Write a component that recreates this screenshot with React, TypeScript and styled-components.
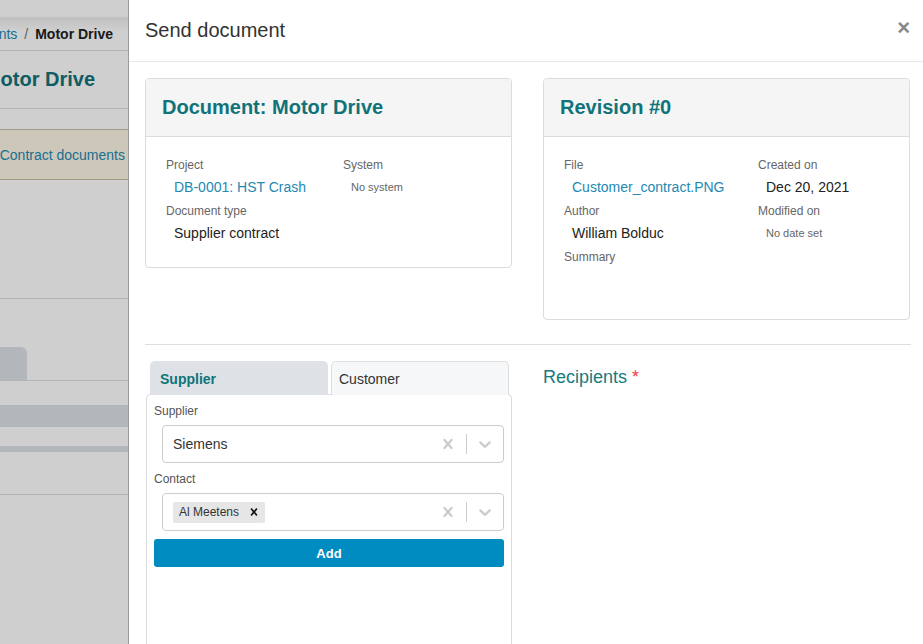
import React from 'react';
import styled, { createGlobalStyle } from 'styled-components';

const teal = '#11737a';
const link = '#2389b3';

const GlobalStyle = createGlobalStyle`
    html, body {
        margin: 0;
        height: 100%;
        overflow: hidden;
        background: #fff;
        font-family: "Liberation Sans", Arial, sans-serif;
    }
    * {
        box-sizing: border-box;
    }
`;

const CrossIcon = ({ size = 20, color = '#ccc' }: { size?: number; color?: string }) => (
    <svg width={size} height={size} viewBox="0 0 20 20" fill={color}>
        <path d="M14.348 14.849c-0.469 0.469-1.229 0.469-1.697 0l-2.651-3.030-2.651 3.029c-0.469 0.469-1.229 0.469-1.697 0-0.469-0.469-0.469-1.229 0-1.697l2.758-3.15-2.759-3.152c-0.469-0.469-0.469-1.228 0-1.697s1.228-0.469 1.697 0l2.652 3.031 2.651-3.031c0.469-0.469 1.228-0.469 1.697 0s0.469 1.229 0 1.697l-2.758 3.152 2.758 3.150c0.469 0.469 0.469 1.229 0 1.698z" />
    </svg>
);

const ChevronIcon = () => (
    <svg width={20} height={20} viewBox="0 0 20 20" fill="#ccc">
        <path d="M4.516 7.548c0.436-0.446 1.043-0.481 1.576 0l3.908 3.747 3.908-3.747c0.533-0.481 1.141-0.446 1.574 0 0.436 0.445 0.408 1.197 0 1.615-0.406 0.418-4.695 4.502-4.695 4.502-0.217 0.223-0.502 0.335-0.787 0.335s-0.57-0.112-0.789-0.335c0 0-4.287-4.084-4.695-4.502s-0.436-1.17 0-1.615z" />
    </svg>
);

const Select = ({ children }: { children: React.ReactNode }) => (
    <SelectBox>
        <ValueArea>{children}</ValueArea>
        <Indicator><CrossIcon /></Indicator>
        <IndicatorSep />
        <Indicator><ChevronIcon /></Indicator>
    </SelectBox>
);

const App: React.FC = () => {
    return (
        <>
            <GlobalStyle />
            {/* page behind the drawer */}
            <BackPage>
                <BackNav>
                    <BackLink>Documents</BackLink>
                    <CrumbSep>/</CrumbSep>
                    <CrumbCurrent>Motor Drive</CrumbCurrent>
                </BackNav>
                <BackTitleRow>
                    <BackTitle>Motor Drive</BackTitle>
                </BackTitleRow>
                <Notice>
                    <BackLink>Contract documents</BackLink>
                </Notice>
                <BackSection />
                <BackTabs>
                    <BackTab />
                </BackTabs>
                <BackBar $h={22} $mt={24} />
                <BackBar $h={6} $mt={19} />
                <BackRule />
            </BackPage>
            <Overlay />

            <Drawer>
                <DrawerHeader>
                    <DrawerTitle>Send document</DrawerTitle>
                    <CloseButton>×</CloseButton>
                </DrawerHeader>
                <DrawerBody>
                    <CardRow>
                        <Card>
                            <CardHeader>
                                <CardTitle>Document: Motor Drive</CardTitle>
                            </CardHeader>
                            <CardBody $cols="177px 1fr">
                                <Field>
                                    <Label>Project</Label>
                                    <Value $link>DB-0001: HST Crash</Value>
                                </Field>
                                <Field>
                                    <Label>System</Label>
                                    <Value $muted>No system</Value>
                                </Field>
                                <Field>
                                    <Label>Document type</Label>
                                    <Value>Supplier contract</Value>
                                </Field>
                            </CardBody>
                        </Card>
                        <Card>
                            <CardHeader>
                                <CardTitle>Revision #0</CardTitle>
                            </CardHeader>
                            <CardBody $cols="194px 1fr">
                                <Field>
                                    <Label>File</Label>
                                    <Value $link>Customer_contract.PNG</Value>
                                </Field>
                                <Field>
                                    <Label>Created on</Label>
                                    <Value>Dec 20, 2021</Value>
                                </Field>
                                <Field>
                                    <Label>Author</Label>
                                    <Value>William Bolduc</Value>
                                </Field>
                                <Field>
                                    <Label>Modified on</Label>
                                    <Value $muted>No date set</Value>
                                </Field>
                                <Field>
                                    <Label>Summary</Label>
                                    <Value $tall />
                                </Field>
                            </CardBody>
                        </Card>
                    </CardRow>

                    <Divider />

                    <LowerRow>
                        <div>
                            <Tabs>
                                <Tab $active>Supplier</Tab>
                                <Tab>Customer</Tab>
                            </Tabs>
                            <Panel>
                                <PanelLabel>Supplier</PanelLabel>
                                <Select>
                                    <SelectText>Siemens</SelectText>
                                </Select>
                                <PanelLabel>Contact</PanelLabel>
                                <Select>
                                    <Chip>
                                        <ChipLabel>Al Meetens</ChipLabel>
                                        <ChipRemove><CrossIcon size={14} color="#111" /></ChipRemove>
                                    </Chip>
                                </Select>
                                <AddButton>Add</AddButton>
                            </Panel>
                        </div>
                        <Recipients>
                            Recipients <Required>*</Required>
                        </Recipients>
                    </LowerRow>
                </DrawerBody>
            </Drawer>
        </>
    );
};

export default App;

/* ---------- background page ---------- */

const BackPage = styled.div`
    width: 128px;
    overflow: hidden;
    background: #fff;
    height: 100vh;
`;

const BackNav = styled.div`
    height: 51px;
    padding: 17px 15px 0 0;
    display: flex;
    align-items: center;
    justify-content: flex-end;
    white-space: nowrap;
    font-size: 14px;
    border-bottom: 1px solid #dedede;
    background: linear-gradient(to bottom, #fff 0, #fff 16px, #ececec 18px, #fff 30px);
`;

const BackLink = styled.span`
    color: ${link};
    font-size: 14px;
`;

const CrumbSep = styled.span`
    color: #777;
    margin: 0 7px;
`;

const CrumbCurrent = styled.span`
    color: #222;
    font-weight: bold;
`;

const BackTitleRow = styled.div`
    height: 58px;
    display: flex;
    align-items: center;
    justify-content: flex-end;
    padding-right: 33px;
    white-space: nowrap;
    border-bottom: 1px solid #dedede;
`;

const BackTitle = styled.div`
    color: ${teal};
    font-size: 20px;
    font-weight: bold;
`;

const Notice = styled.div`
    margin-top: 20px;
    height: 51px;
    background: #fdf6e5;
    border-top: 1px solid #c6bfa3;
    border-bottom: 1px solid #c6bfa3;
    display: flex;
    align-items: center;
    justify-content: flex-end;
    padding-right: 3px;
    white-space: nowrap;
`;

const BackSection = styled.div`
    height: 119px;
    border-bottom: 1px solid #dedede;
`;

const BackTabs = styled.div`
    height: 82px;
    display: flex;
    align-items: flex-end;
    border-bottom: 1px solid #dedede;
`;

const BackTab = styled.div`
    width: 27px;
    height: 33px;
    background: #dde1e5;
    border-radius: 0 6px 0 0;
`;

const BackBar = styled.div<{ $h: number; $mt: number }>`
    height: ${p => p.$h}px;
    margin-top: ${p => p.$mt}px;
    background: #dde1e5;
`;

const BackRule = styled.div`
    height: 43px;
    border-bottom: 1px solid #dedede;
`;

const Overlay = styled.div`
    position: fixed;
    inset: 0;
    background: rgba(0, 0, 0, 0.19);
`;

/* ---------- drawer ---------- */

const Drawer = styled.div`
    position: fixed;
    top: 0;
    right: 0;
    bottom: 0;
    width: 795px;
    background: #fff;
    border-left: 1px solid #9c9c9c;
    display: flex;
    flex-direction: column;
    overflow: hidden;
`;

const DrawerHeader = styled.div`
    height: 62px;
    flex-shrink: 0;
    padding: 0 13px 0 16px;
    display: flex;
    align-items: center;
    justify-content: space-between;
    border-bottom: 1px solid #e8e8e8;
`;

const DrawerTitle = styled.h1`
    margin: 0;
    font-size: 20px;
    font-weight: normal;
    color: #333;
`;

const CloseButton = styled.button`
    border: none;
    background: none;
    padding: 0;
    margin-bottom: 5px;
    font-family: "Liberation Sans", Arial, sans-serif;
    font-size: 22px;
    font-weight: bold;
    color: #888;
    cursor: pointer;
    line-height: 1;
`;

const DrawerBody = styled.div`
    padding: 16px 12px 0 16px;
`;

const CardRow = styled.div`
    display: grid;
    grid-template-columns: 367px 367px;
    column-gap: 31px;
    align-items: start;
`;

const Card = styled.div`
    border: 1px solid #dcdcdc;
    border-radius: 4px;
    background: #fff;
    overflow: hidden;
`;

const CardHeader = styled.div`
    height: 58px;
    background: #f5f5f5;
    border-bottom: 1px solid #dcdcdc;
    padding: 0 16px;
    display: flex;
    align-items: center;
`;

const CardTitle = styled.h2`
    margin: 0;
    font-size: 20px;
    font-weight: bold;
    color: ${teal};
`;

const CardBody = styled.div<{ $cols: string }>`
    display: grid;
    grid-template-columns: ${p => p.$cols};
    row-gap: 6px;
    padding: 20px 20px 24px;
`;

const Field = styled.div``;

const Label = styled.div`
    font-size: 12px;
    line-height: 16px;
    color: #666;
`;

const Value = styled.div<{ $link?: boolean; $muted?: boolean; $tall?: boolean }>`
    margin-top: 4px;
    padding-left: 8px;
    line-height: 20px;
    font-size: ${p => (p.$muted ? '11px' : '14px')};
    color: ${p => (p.$link ? link : p.$muted ? '#666' : '#222')};
    min-height: ${p => (p.$tall ? '26px' : '20px')};
    white-space: nowrap;
`;

const Divider = styled.hr`
    margin: 24px 0 16px;
    border: none;
    border-top: 1px solid #dedede;
`;

const LowerRow = styled.div`
    display: grid;
    grid-template-columns: 367px 1fr;
    column-gap: 31px;
    align-items: start;
`;

const Tabs = styled.div`
    display: flex;
    gap: 3px;
    padding-left: 5px;
    position: relative;
    z-index: 1;
`;

const Tab = styled.div<{ $active?: boolean }>`
    width: 178px;
    height: 34px;
    display: flex;
    align-items: center;
    font-size: 14px;
    border-radius: 5px 5px 0 0;
    padding-left: ${p => (p.$active ? '9px' : '7px')};
    font-weight: ${p => (p.$active ? 'bold' : 'normal')};
    color: ${p => (p.$active ? teal : '#333')};
    background: ${p => (p.$active ? '#dee2e6' : '#f6f7f9')};
    border: 1px solid ${p => (p.$active ? '#dee2e6' : '#dddddd')};
    border-bottom: none;
`;

const Panel = styled.div`
    margin: -1px 0 0 1px;
    border: 1px solid #dcdcdc;
    border-radius: 4px;
    padding: 8px 7px 7px;
    min-height: 270px;
`;

const PanelLabel = styled.div`
    font-size: 12px;
    line-height: 16px;
    color: #555;
    margin-bottom: 6px;
`;

const SelectBox = styled.div`
    margin: 0 0 8px 8px;
    height: 38px;
    border: 1px solid #cccccc;
    border-radius: 4px;
    display: flex;
    align-items: center;
    background: #fff;
`;

const ValueArea = styled.div`
    flex: 1;
    display: flex;
    align-items: center;
    padding: 2px 8px 2px 10px;
`;

const SelectText = styled.span`
    font-size: 14px;
    color: #333;
`;

const Indicator = styled.div`
    width: 36px;
    display: flex;
    justify-content: center;
`;

const IndicatorSep = styled.span`
    width: 1px;
    height: 20px;
    background: #cccccc;
`;

const Chip = styled.div`
    display: flex;
    align-items: center;
    height: 21px;
    background: #e6e6e6;
    border-radius: 2px;
`;

const ChipLabel = styled.span`
    font-size: 12px;
    color: #333;
    padding: 0 4px 0 6px;
`;

const ChipRemove = styled.span`
    width: 22px;
    display: flex;
    justify-content: center;
`;

const AddButton = styled.button`
    display: block;
    width: 100%;
    height: 28px;
    border: none;
    border-radius: 3px;
    background: #008bc1;
    color: #fff;
    font-family: "Liberation Sans", Arial, sans-serif;
    font-size: 13px;
    font-weight: bold;
    cursor: pointer;
`;

const Recipients = styled.div`
    padding-top: 5px;
    font-size: 18px;
    line-height: 22px;
    color: #177a80;
`;

const Required = styled.span`
    color: #f03c3c;
`;
